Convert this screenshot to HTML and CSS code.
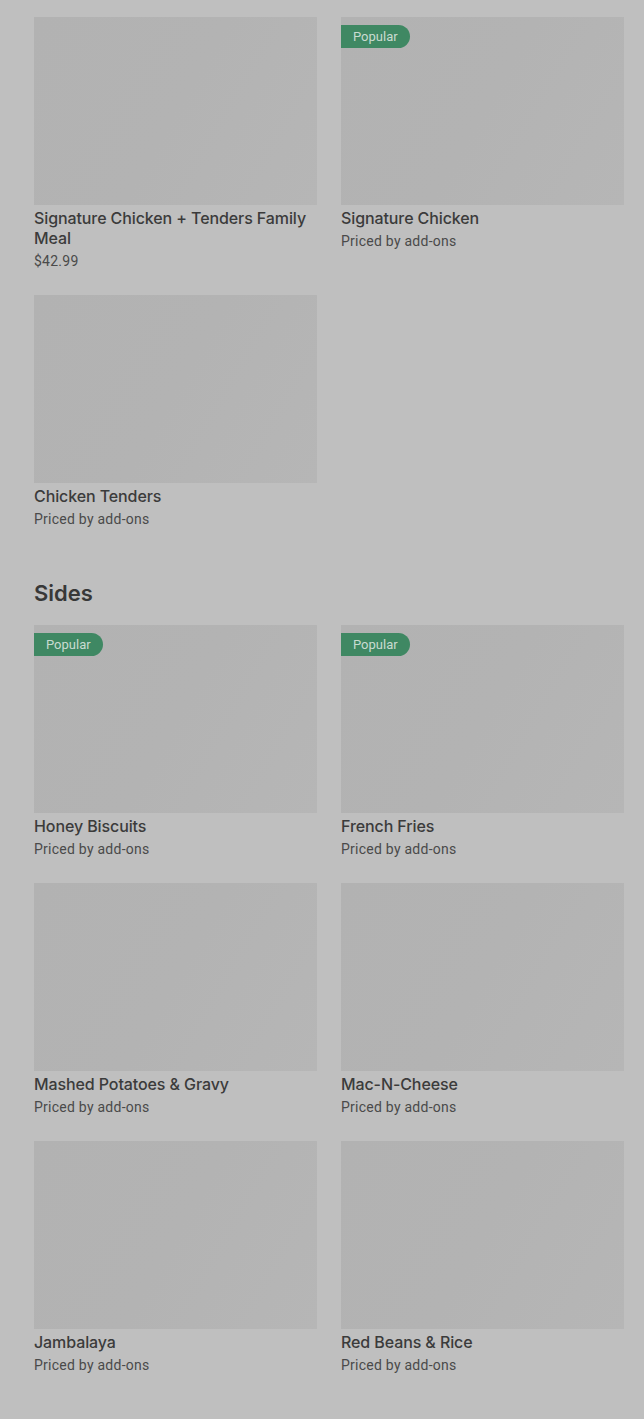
FILE: index.html
```html
<!DOCTYPE html>
<html lang="en">
<head>
<meta charset="utf-8">
<title>Menu</title>
<link rel="stylesheet" href="styles.css">
</head>
<body>
<main class="page">
  <section class="section">
    <div class="grid">
      <div class="card">
        <div class="thumb"></div>
        <div class="title">Signature Chicken + Tenders Family Meal</div>
        <div class="sub">$42.99</div>
      </div>
      <div class="card">
        <div class="thumb"><span class="badge">Popular</span></div>
        <div class="title">Signature Chicken</div>
        <div class="sub">Priced by add-ons</div>
      </div>
      <div class="card">
        <div class="thumb"></div>
        <div class="title">Chicken Tenders</div>
        <div class="sub">Priced by add-ons</div>
      </div>
    </div>
  </section>
  <section class="section">
    <h2 class="heading">Sides</h2>
    <div class="grid">
      <div class="card">
        <div class="thumb"><span class="badge">Popular</span></div>
        <div class="title">Honey Biscuits</div>
        <div class="sub">Priced by add-ons</div>
      </div>
      <div class="card">
        <div class="thumb"><span class="badge">Popular</span></div>
        <div class="title">French Fries</div>
        <div class="sub">Priced by add-ons</div>
      </div>
      <div class="card">
        <div class="thumb"></div>
        <div class="title">Mashed Potatoes &amp; Gravy</div>
        <div class="sub">Priced by add-ons</div>
      </div>
      <div class="card">
        <div class="thumb"></div>
        <div class="title">Mac-N-Cheese</div>
        <div class="sub">Priced by add-ons</div>
      </div>
      <div class="card">
        <div class="thumb"></div>
        <div class="title">Jambalaya</div>
        <div class="sub">Priced by add-ons</div>
      </div>
      <div class="card">
        <div class="thumb"></div>
        <div class="title">Red Beans &amp; Rice</div>
        <div class="sub">Priced by add-ons</div>
      </div>
    </div>
  </section>
</main>
</body>
</html>
```

FILE: styles.css
```css
html, body {
  margin: 0;
  padding: 0;
  background: #bfbfbf;
}
body {
  font-family: "Inter", "Roboto", "Liberation Sans", sans-serif;
  color: #3a3a3a;
}
.page {
  padding: 17px 20px 40px 34px;
}
.section {
  display: flex;
  flex-direction: column;
}
.grid {
  display: grid;
  grid-template-columns: 283px 283px;
  column-gap: 24px;
  row-gap: 24px;
  align-items: start;
}
.card {
  display: flex;
  flex-direction: column;
}
.thumb {
  position: relative;
  height: 188px;
  background: linear-gradient(120deg, #b2b2b2 0%, #b3b3b3 50%, #b6b6b6 100%);
}
.badge {
  position: absolute;
  top: 8px;
  left: 0;
  height: 23px;
  padding: 0 12px;
  display: flex;
  align-items: center;
  background: #3f8863;
  color: #c9dbd1;
  font-family: "Roboto", "Liberation Sans", sans-serif;
  font-size: 13px;
  border-radius: 0 12px 12px 0;
}
.title {
  margin-top: 3px;
  font-size: 16px;
  line-height: 20px;
  font-weight: 500;
  letter-spacing: -0.1px;
  color: #3b3b3b;
}
.sub {
  margin-top: 3px;
  font-family: "Roboto", "Liberation Sans", sans-serif;
  font-size: 14px;
  line-height: 20px;
  letter-spacing: 0.25px;
  color: #4a4a4a;
}
.heading {
  margin: 48px 0 16px;
  font-size: 22px;
  line-height: 32px;
  font-weight: 600;
  color: #383838;
}
```
